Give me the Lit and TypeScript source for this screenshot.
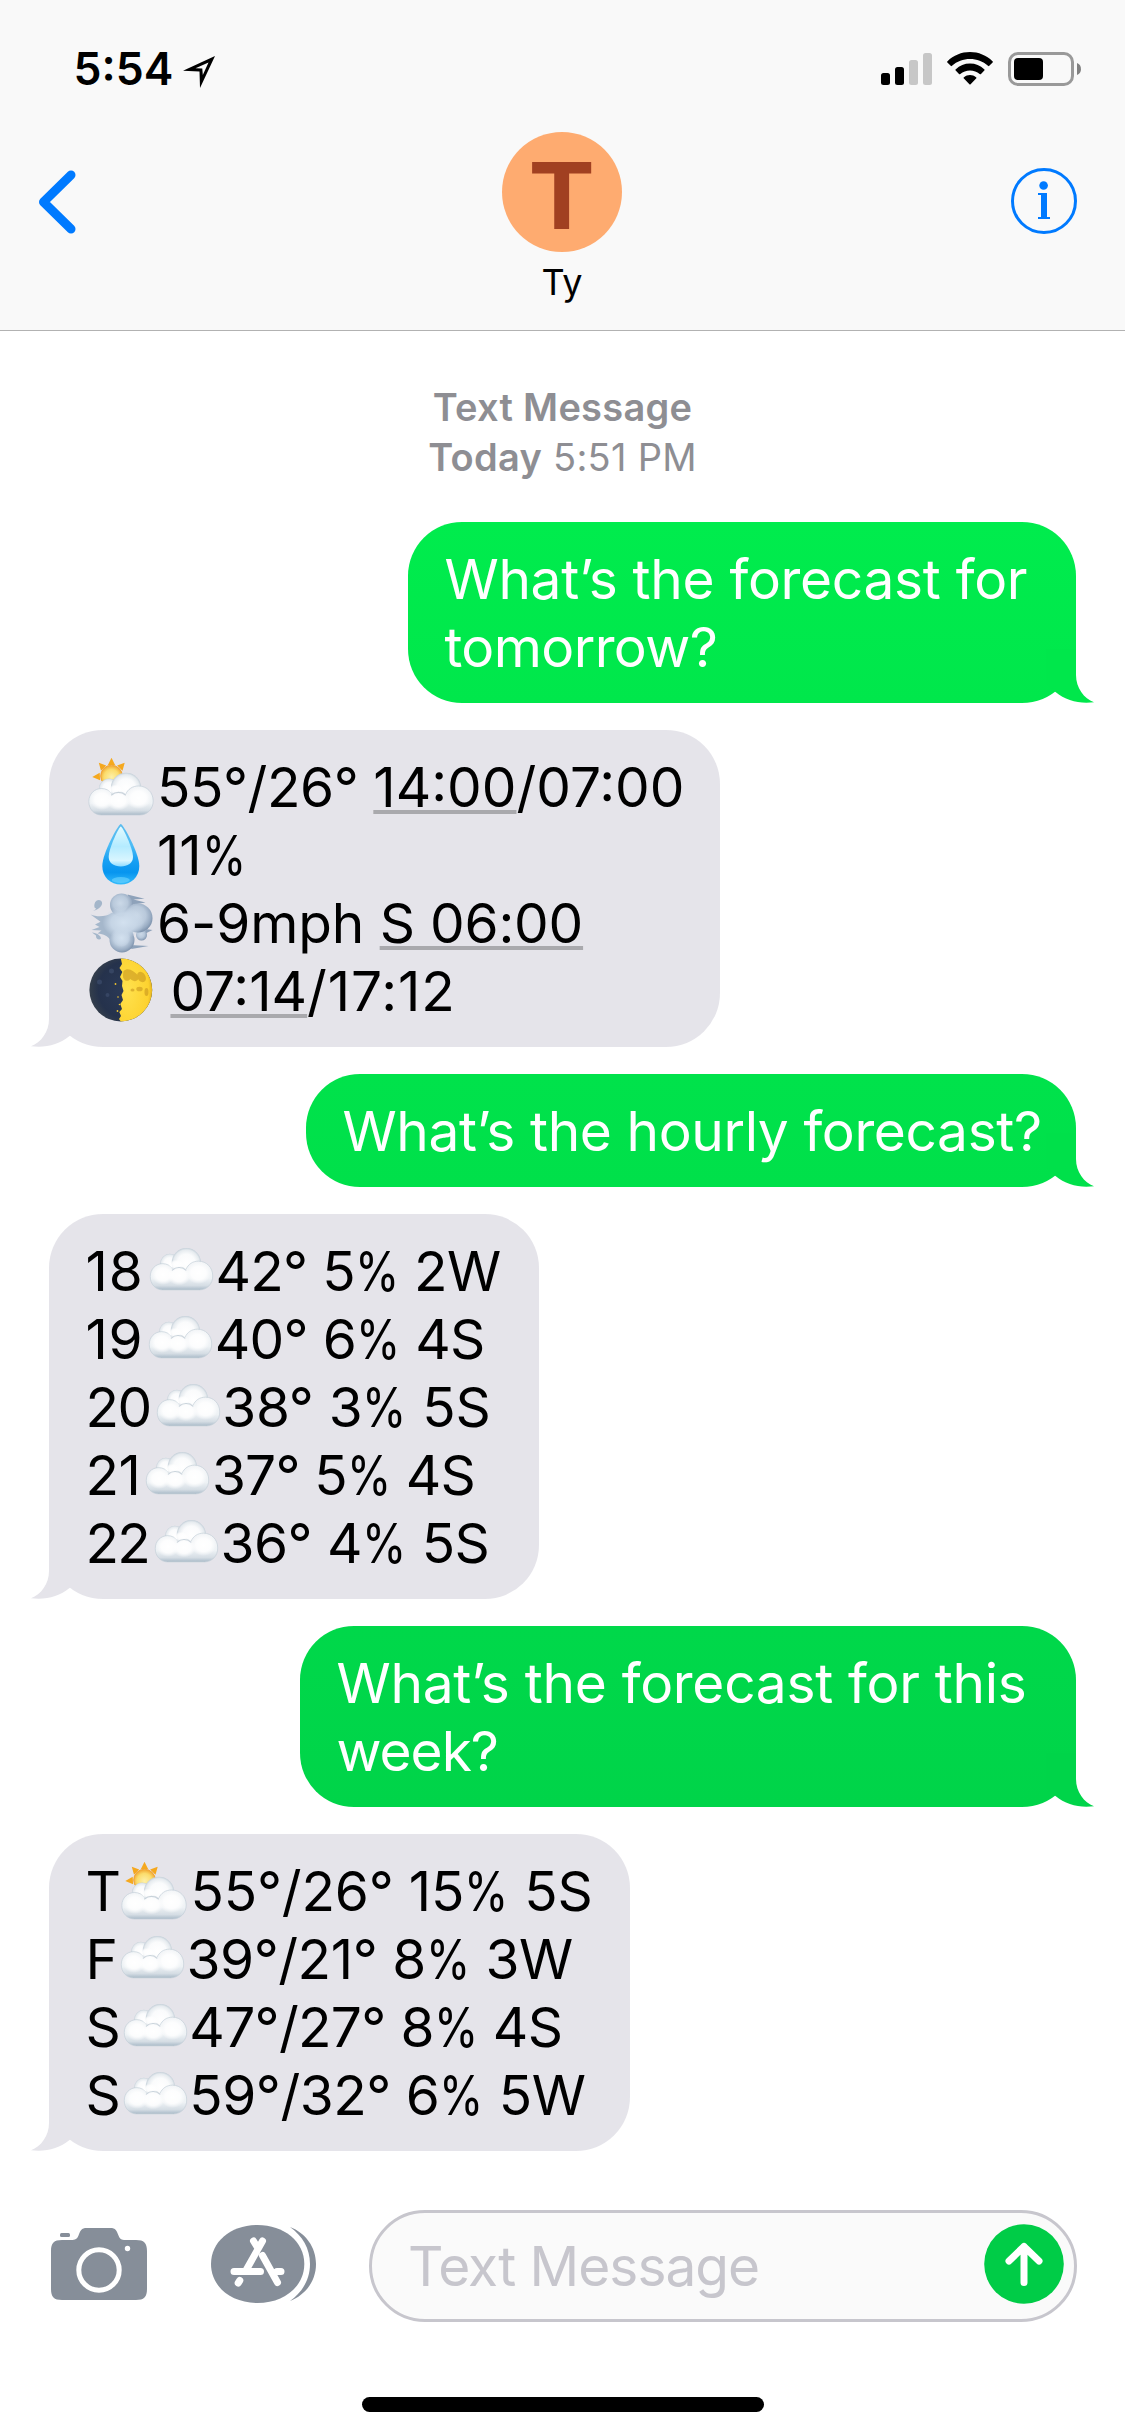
import { css, html, LitElement, svg } from "lit";
import { customElement, property } from "lit/decorators.js";
import { classMap } from "lit/directives/class-map.js";
import { styleMap } from "lit/directives/style-map.js";

type Glyph = "partly" | "cloud" | "drop" | "wind" | "moon";

interface Part {
  text?: string;
  link?: boolean;
  glyph?: Glyph;
  // letter spacing in px
  track?: number;
}

interface Message {
  sent: boolean;
  width: number;
  fill: [string, string];
  lines: Part[][];
}

const t = (text: string, track = 0): Part => ({ text, track });
const link = (text: string, track = 0): Part => ({ text, track, link: true });
const g = (glyph: Glyph): Part => ({ glyph });

const GRAY: [string, string] = ["#e5e4ea", "#e5e4ea"];

const MESSAGES: Message[] = [
  {
    sent: true,
    width: 668,
    fill: ["#00ec4d", "#00e74b"],
    lines: [[t("What’s the forecast for", -0.3)], [t("tomorrow?", -0.6)]],
  },
  {
    sent: false,
    width: 671,
    fill: GRAY,
    lines: [
      [g("partly"), t("55°/26° ", -0.45), link("14:00"), t("/07:00")],
      [g("drop"), t("11%")],
      [g("wind"), t("6-9mph ", -0.1), link("S 06:00", -0.2)],
      [g("moon"), t(" ", -2), link("07:14"), t("/17:12", 0.9)],
    ],
  },
  {
    sent: true,
    width: 770,
    fill: ["#00e24b", "#00e04a"],
    lines: [[t("What’s the hourly forecast?", -0.38)]],
  },
  {
    sent: false,
    width: 490,
    fill: GRAY,
    lines: [
      [t("18", 1), g("cloud"), t("42° 5% 2W", -0.7)],
      [t("19", 0.6), g("cloud"), t("40° 6% 4S", -0.7)],
      [t("20", -1.5), g("cloud"), t("38° 3% 5S", -0.3)],
      [t("21", -0.5), g("cloud"), t("37° 5% 4S", -0.8)],
      [t("22", -1.8), g("cloud"), t("36° 4% 5S", -0.5)],
    ],
  },
  {
    sent: true,
    width: 776,
    fill: ["#00d84a", "#00d449"],
    lines: [[t("What’s the forecast for this", -0.28)], [t("week?", -1)]],
  },
  {
    sent: false,
    width: 581,
    fill: GRAY,
    lines: [
      [t("T", -2), g("partly"), t("55°/26° 15% 5S", -0.2)],
      [t("F", -3), g("cloud"), t("39°/21° 8% 3W", -0.45)],
      [t("S", -3), g("cloud"), t("47°/27° 8% 4S", -0.7)],
      [t("S", -3), g("cloud"), t("59°/32° 6% 5W", -0.5)],
    ],
  },
];

@customElement("weather-glyph")
export class WeatherGlyph extends LitElement {
  @property({ type: String })
  kind: Glyph = "cloud";

  render() {
    return html`
      <svg class="glyph" viewBox="-1.5 0 71.5 68" aria-hidden="true">
        ${this._shape()}
      </svg>
    `;
  }

  private _shape() {
    switch (this.kind) {
      case "partly":
        return this._partly();
      case "drop":
        return this._drop();
      case "wind":
        return this._wind();
      case "moon":
        return this._moon();
      default:
        return svg`<g transform="translate(3.5 -8.5) scale(0.97 0.99)">${this._cloud()}</g>`;
    }
  }

  private _cloud() {
    return svg`
      <defs>
        <linearGradient id="body" x1="0" y1="0" x2="0" y2="1">
          <stop offset="0" stop-color="#f4f6f8" />
          <stop offset="0.6" stop-color="#eef2f5" />
          <stop offset="0.85" stop-color="#d5dde4" />
          <stop offset="1" stop-color="#a9bac8" />
        </linearGradient>
        <radialGradient id="puff" cx="0.5" cy="0.5" r="0.5">
          <stop offset="0" stop-color="#ffffff" />
          <stop offset="0.6" stop-color="#fafbfc" />
          <stop offset="0.88" stop-color="#e6ebef" />
          <stop offset="1" stop-color="#c6d1da" />
        </radialGradient>
        <radialGradient id="light" cx="0.5" cy="0.5" r="0.5">
          <stop offset="0" stop-color="#ffffff" />
          <stop offset="0.6" stop-color="#ffffff" stop-opacity="0.85" />
          <stop offset="1" stop-color="#ffffff" stop-opacity="0" />
        </radialGradient>
      </defs>
      <circle cx="21.5" cy="35.5" r="10" fill="url(#puff)" />
      <circle cx="38.5" cy="35" r="15.200" fill="url(#puff)" />
      <path
        d="M14 62 C6.500 62 1.300 56 1.300 48.500 C1.300 41 7 35.500 14 35.500 C18.500 35.500 22 37.500 24.500 41 C28 38 34.500 38 38 41.500 C40.500 36 45 33 51 33 C59.500 33 65.700 39.500 65.700 48 C65.700 56 60 62 52 62 Z"
        fill="url(#body)" stroke="#c3ced8" stroke-width="0.7" />
      <ellipse cx="14.500" cy="46.500" rx="12" ry="10.500" fill="url(#light)" />
      <ellipse cx="51" cy="45" rx="13" ry="11" fill="url(#light)" />
      <ellipse cx="31" cy="47.500" rx="12" ry="10" fill="url(#light)" />
      <ellipse cx="28" cy="36.500" rx="8" ry="5" fill="url(#light)" />
      <path d="M24 42 C28 38.500 34 38.500 38 42" fill="none" stroke="#c8d2da" stroke-width="1.100" stroke-linecap="round" />
    `;
  }

  private _partly() {
    return svg`
      <defs>
        <radialGradient id="sun" cx="0.5" cy="0.55" r="0.5">
          <stop offset="0" stop-color="#fdf0a8" />
          <stop offset="0.7" stop-color="#fbdc6c" />
          <stop offset="1" stop-color="#f3b13c" />
        </radialGradient>
      </defs>
      <path
        d="M24 4.800 L27.600 12 L20.400 12 Z M37.200 9.800 L35 17.800 L29.600 12.500 Z M11.300 9.800 L18.700 12.500 L13.500 17.800 Z M4.800 24 L12.200 19.800 L12.600 27.200 Z"
        fill="#f5a81e" />
      <circle cx="24" cy="23" r="10.800" fill="url(#sun)" stroke="#f0a030" stroke-width="0.9" />
      ${this._cloud()}
    `;
  }

  private _drop() {
    return svg`
      <defs>
        <linearGradient id="water" x1="0" y1="0" x2="0" y2="1">
          <stop offset="0" stop-color="#5dbcee" />
          <stop offset="0.35" stop-color="#4dbcf5" />
          <stop offset="0.6" stop-color="#18a0f3" />
          <stop offset="0.8" stop-color="#0795ef" />
          <stop offset="1" stop-color="#35bcfc" />
        </linearGradient>
        <linearGradient id="shine" x1="0" y1="0" x2="0" y2="1">
          <stop offset="0" stop-color="#e4fbff" />
          <stop offset="0.5" stop-color="#b4ebff" />
          <stop offset="0.85" stop-color="#d9f6ff" />
          <stop offset="1" stop-color="#8fdcff" />
        </linearGradient>
      </defs>
      <path d="M33.300 3 C35.500 3 51.800 32 51.800 45 C51.800 56 43.500 63.500 33.300 63.500 C23 63.500 14.800 56 14.800 45 C14.800 32 31 3 33.300 3 Z" fill="url(#water)" />
      <path d="M33.300 5.500 C35 5.500 45.500 27 45.500 36 C45.500 42 40 45.500 33.300 45.500 C26.500 45.500 21.200 42 21.200 36 C21.200 27 31.700 5.500 33.300 5.500 Z" fill="url(#shine)" />
      <ellipse cx="33.300" cy="59" rx="9" ry="3" fill="#6fd6ff" opacity="0.6" />
    `;
  }

  private _wind() {
    return svg`
      <defs>
        <radialGradient id="lobe" cx="0.45" cy="0.42" r="0.58">
          <stop offset="0" stop-color="#cbd9e8" />
          <stop offset="0.55" stop-color="#b9c9db" />
          <stop offset="0.85" stop-color="#98abc2" />
          <stop offset="1" stop-color="#7e93ad" />
        </radialGradient>
        <radialGradient id="core" cx="0.5" cy="0.5" r="0.5">
          <stop offset="0" stop-color="#d3e1ef" />
          <stop offset="0.6" stop-color="#c9d8e8" stop-opacity="0.9" />
          <stop offset="1" stop-color="#c9d8e8" stop-opacity="0" />
        </radialGradient>
      </defs>
      <path
        d="M24 24 C19 27.500 10 28.500 3 25.500 L13 32.800 L7.500 35.500 L12 38 L4 41 L14 41.500 L10 44.500 C17 45 19.500 47 23 51 L46 46 L40 18 Z"
        fill="#a5b7cb" />
      <path d="M40 5.500 L57 9.800 L46 10.500 L58 13.500 L44 16 Z M58 40 L65 41 L57 45 Z M42 56 L61 57 L44 60 Z" fill="#8ea2ba" />
      <circle cx="54" cy="46" r="5.500" fill="url(#lobe)" />
      <circle cx="34" cy="16" r="11.500" fill="url(#lobe)" />
      <circle cx="34.500" cy="51" r="12.500" fill="url(#lobe)" />
      <circle cx="50.500" cy="29" r="14.500" fill="url(#lobe)" />
      <ellipse cx="36" cy="33.500" rx="21" ry="16" fill="url(#core)" />
      <ellipse cx="34" cy="49" rx="9" ry="9" fill="url(#core)" />
      <path d="M7 18.500 C6 13 10 9.500 13.500 11.800 C17 15 12 20.500 5.500 22 C8.500 20.500 9.500 19.500 7 18.500 Z" fill="#a4b6ca" />
      <path d="M4.500 43.500 C9 44 13.500 46.500 13.500 49.500 C12 52 8 50 8.500 46.500 Z" fill="#a4b6ca" />
    `;
  }

  private _moon() {
    return svg`
      <defs>
        <radialGradient id="dark" cx="0.6" cy="0.5" r="0.65">
          <stop offset="0" stop-color="#2b3a58" />
          <stop offset="0.7" stop-color="#25324c" />
          <stop offset="1" stop-color="#3a434b" />
        </radialGradient>
        <radialGradient id="lit" cx="0.25" cy="0.5" r="0.85">
          <stop offset="0" stop-color="#ffe14d" />
          <stop offset="0.75" stop-color="#fdd22f" />
          <stop offset="1" stop-color="#d09a16" />
        </radialGradient>
      </defs>
      <circle cx="33.300" cy="33" r="31.400" fill="url(#dark)" />
      <path
        d="M33.300 1.600 A31.400 31.400 0 0 1 33.300 64.400 L31.500 62 L33.500 59 L31.800 55 L34.500 52 L32.800 47 L35.500 43 L34 38 L36 34 L34.500 29 L35 24 L32.500 20 L34.800 15 L32 11 L34.500 7 Z"
        fill="url(#lit)" />
      <g fill="#c9971f" opacity="0.6">
        <path d="M36 14 C41 10 46 14 51 19 C52 24 47 26 43 22 C39 26 35 23 35.500 18 Z" />
        <ellipse cx="54" cy="20" rx="4" ry="5.500" transform="rotate(-30 54 20)" />
        <ellipse cx="52" cy="32" rx="3.200" ry="2.300" />
        <ellipse cx="59" cy="35" rx="2" ry="4" />
        <ellipse cx="45" cy="33" rx="2" ry="1.500" />
      </g>
      <g fill="#f2c52e">
        <circle cx="28" cy="27" r="0.900" />
        <circle cx="30.500" cy="40" r="0.800" />
        <circle cx="30" cy="54" r="0.900" />
        <circle cx="32" cy="47.500" r="0.800" />
      </g>
      <g fill="#3d4d6c" opacity="0.7">
        <circle cx="12" cy="25" r="2.500" />
        <circle cx="20" cy="38" r="2" />
        <circle cx="24" cy="14" r="2.500" />
      </g>
    `;
  }

  static styles = css`
    :host {
      display: block;
      flex: none;
    }

    .glyph {
      display: block;
      width: 71.5px;
      height: 68px;
    }
  `;
}

@customElement("message-bubble")
export class MessageBubble extends LitElement {
  @property({ attribute: false })
  message!: Message;

  render() {
    const { sent, width, fill, lines } = this.message;
    return html`
      <div
        class=${classMap({ bubble: true, sent })}
        style=${styleMap({
          width: `${width}px`,
          "--top": fill[0],
          "--bottom": fill[1],
        })}
      >
        ${lines.map(
          (parts) => html`<div class="line">${parts.map((p) => this._part(p))}</div>`
        )}
        <svg class="tail" viewBox="-30 -54 48 54" aria-hidden="true">
          <path
            d="M-30 -54 L0 -54 L0 -28 C0 -15 8 -4.500 18 -0.800 C4 1 -10 -2 -20.500 -11 L-30 -20 Z"
          />
        </svg>
      </div>
    `;
  }

  private _part(part: Part) {
    if (part.glyph) {
      return html`<weather-glyph kind=${part.glyph}></weather-glyph>`;
    }
    // the percent sign is set narrower than the font draws it
    const [before, after] = (part.text ?? "").split("%");
    return html`<span
      class=${classMap({ text: true, link: !!part.link })}
      style=${styleMap({ letterSpacing: `${part.track ?? 0}px` })}
      >${before}${after === undefined
        ? ""
        : html`<span class="percent">%</span>${after}`}</span
    >`;
  }

  static styles = css`
    :host {
      display: flex;
    }

    .bubble {
      position: relative;
      box-sizing: border-box;
      padding: 23px 0 21.8px 36.5px;
      border-radius: 54px;
      background: linear-gradient(var(--top), var(--bottom));
      color: #000;
      font-size: 55px;
      line-height: 68px;
    }

    .sent {
      margin-left: auto;
      color: #fff;
    }

    .line {
      display: flex;
      height: 68px;
    }

    .text {
      white-space: pre;
    }

    .percent {
      display: inline-block;
      margin-right: -9px;
      transform: scaleX(0.82);
      transform-origin: left;
    }

    .link {
      text-decoration: underline;
      text-decoration-color: #a9a9ad;
      text-decoration-thickness: 4px;
      text-decoration-skip-ink: none;
      text-underline-offset: 3px;
    }

    .tail {
      position: absolute;
      bottom: 0;
      left: -18px;
      width: 48px;
      height: 54px;
      overflow: visible;
      fill: var(--bottom);
      transform: scaleX(-1);
    }

    .sent .tail {
      left: auto;
      right: -18px;
      transform: none;
    }
  `;
}

@customElement("app-root")
export class AppRoot extends LitElement {
  render() {
    return html`
      <header class="header">
        ${this._statusBar()}
        <div class="nav">
          <svg class="back" viewBox="0 0 38 64">
            <path d="M33 5 L5.500 32 L33 59" />
          </svg>
          <div class="contact">
            <div class="avatar"><span class="initial">T</span></div>
            <div class="name">Ty</div>
          </div>
          <svg class="info" viewBox="0 0 66 66">
            <circle class="ring" cx="33" cy="33" r="31.500" />
            <circle cx="32.600" cy="17.500" r="4.300" />
            <path d="M27 25 H36 V49 H39 V51 H27 V49 H30 V27 H27 Z" />
          </svg>
        </div>
      </header>
      <main class="thread">
        <div class="stamp">
          <div><b>Text Message</b></div>
          <div><b>Today</b> 5:51 PM</div>
        </div>
        ${MESSAGES.map(
          (m) => html`<message-bubble .message=${m}></message-bubble>`
        )}
      </main>
      ${this._composer()}
      <div class="home"></div>
    `;
  }

  private _statusBar() {
    return html`
      <div class="status">
        <span class="time">5:54</span>
        <svg class="location" viewBox="0 0 32 32">
          <path
            fill-rule="evenodd"
            d="M32 0 L17 32 L16.500 15.500 L0 14.800 Z M25.500 6.500 L12.500 12.300 L19.300 12.500 L19.800 19 Z"
          />
        </svg>
        <svg class="signal" viewBox="0 0 51 34">
          <rect x="0" y="21" width="9" height="12" rx="2.500" />
          <rect x="14" y="15" width="9" height="18" rx="2.500" />
          <rect class="off" x="28" y="8" width="9" height="25" rx="2.500" />
          <rect class="off" x="42" y="1" width="9" height="32" rx="2.500" />
        </svg>
        <svg class="wifi" viewBox="0 0 46 34">
          <path
            d="M23 0 C31.500 0 39.500 3.300 45.500 9.200 C46 9.700 46 10 45.600 10.400 L42.300 13.800 C41.800 14.300 41.500 14.300 41 13.800 C36 9.300 29.800 7 23 7 C16.200 7 10 9.300 5 13.800 C4.500 14.300 4.200 14.300 3.700 13.800 L0.400 10.400 C0 10 0 9.700 0.500 9.200 C6.500 3.300 14.500 0 23 0 Z"
          />
          <path
            d="M23 11.500 C28.500 11.500 33.300 13.500 37.200 17.300 C37.700 17.800 37.700 18.100 37.300 18.500 L34 21.900 C33.500 22.400 33.200 22.400 32.700 21.900 C30 19.600 26.700 18.400 23 18.400 C19.300 18.400 16 19.600 13.300 21.900 C12.800 22.400 12.500 22.400 12 21.900 L8.700 18.500 C8.300 18.100 8.300 17.800 8.800 17.300 C12.700 13.500 17.500 11.500 23 11.500 Z"
          />
          <path
            d="M23 23 C25.200 23 27.300 23.800 29 25.200 C29.600 25.700 29.600 26.100 29.100 26.600 L23.600 32.300 C23.200 32.700 22.800 32.700 22.400 32.300 L16.900 26.600 C16.400 26.100 16.400 25.700 17 25.200 C18.700 23.800 20.800 23 23 23 Z"
          />
        </svg>
        <svg class="battery" viewBox="0 0 74 34">
          <rect class="shell" x="1.500" y="1.500" width="63" height="31" rx="8.500" />
          <rect x="6" y="6" width="29" height="22" rx="4" />
          <path class="nub" d="M69 11 C74.300 12.500 74.300 21.500 69 23 Z" />
        </svg>
      </div>
    `;
  }

  private _composer() {
    return html`
      <div class="composer">
        <svg class="camera" viewBox="0 0 96 72">
          <rect x="9" y="5" width="10" height="4" rx="1.500" />
          <path
            d="M11 12 H20 C24.500 12 26 11 27.500 7.500 C29.500 2.500 30 0 36 0 H59 C65 0 65.500 2.500 67.500 7.500 C69 11 70 12 74.500 12 H85 C93 12 96 15 96 23 V61 C96 69 93 72 85 72 H11 C3 72 0 69 0 61 V23 C0 15 3 12 11 12 Z"
          />
          <circle class="lens" cx="48" cy="42" r="20.200" />
          <circle class="flash" cx="76.500" cy="20.500" r="2.700" />
        </svg>
        <svg class="apps" viewBox="0 0 105 78">
          <path
            d="M46.500 0 C73 0 93.300 16.500 93.300 39 C93.300 61.500 73 78 46.500 78 C20 78 0 61.500 0 39 C0 16.500 20 0 46.500 0 Z"
          />
          <path
            d="M79 2 C94.500 8 105 22 105 39 C105 56 94.500 70 79 76 C91.500 67 99 54.500 99 39 C99 23.500 91.500 11 79 2 Z"
          />
          <path
            class="stroke"
            d="M42.500 16 L46.500 22.500 M51.500 16 L35.500 44.500 M23 46.500 H49.500 M66 46.500 H70 M51.500 30.500 L66.500 57.500 M28.800 55.500 L27.200 58"
          />
        </svg>
        <div class="field">
          <span class="placeholder">Text Message</span>
          <svg class="send" viewBox="0 0 80 80">
            <circle cx="40" cy="40" r="39.800" />
            <path d="M40 22.500 V58.500 M25 37 L40 22.500 L55 37" />
          </svg>
        </div>
      </div>
    `;
  }

  static styles = css`
    :host {
      display: flex;
      flex-direction: column;
      box-sizing: border-box;
      width: 1125px;
      height: 2436px;
      overflow: hidden;
      background: #fff;
      font-family: Inter, "Liberation Sans", sans-serif;
      color: #000;
    }

    svg {
      display: block;
      flex: none;
    }

    .header {
      box-sizing: border-box;
      height: 331px;
      background: #f9f9f9;
      border-bottom: 1px solid #b2b2b2;
    }

    .status {
      display: flex;
      align-items: center;
      box-sizing: border-box;
      height: 132px;
      padding: 6px 43px 0 73.5px;
    }

    .time {
      width: 109.5px;
      font-size: 44.5px;
      font-weight: 600;
      line-height: 54px;
    }

    .location {
      width: 32px;
      height: 32px;
      margin-top: 5px;
    }

    .signal {
      width: 51px;
      height: 34px;
      margin-left: auto;
    }

    .signal .off {
      fill: #c7c7c7;
    }

    .wifi {
      width: 46px;
      height: 34px;
      margin-left: 15px;
    }

    .battery {
      width: 74px;
      height: 34px;
      margin-left: 15px;
    }

    .battery .shell {
      fill: none;
      stroke: #999;
      stroke-width: 3;
    }

    .battery .nub {
      fill: #808080;
    }

    .nav {
      display: grid;
      grid-template-columns: 1fr auto 1fr;
      align-items: start;
      padding: 0 48px 0 38px;
    }

    .back {
      width: 38px;
      height: 64px;
      margin-top: 37.5px;
      fill: none;
      stroke: #007aff;
      stroke-width: 9;
      stroke-linecap: round;
      stroke-linejoin: round;
    }

    .contact {
      display: flex;
      flex-direction: column;
      align-items: center;
      margin-left: 9px;
    }

    .avatar {
      width: 120px;
      height: 120px;
      border-radius: 50%;
      background: #feab70;
      color: #a14021;
      font-size: 92px;
      font-weight: 700;
      line-height: 127px;
      text-align: center;
    }

    .initial {
      display: inline-block;
      transform: scaleX(1.08);
    }

    .name {
      margin-top: 8px;
      font-size: 36px;
      line-height: 44px;
    }

    .info {
      width: 66px;
      height: 66px;
      margin-top: 36px;
      justify-self: end;
      fill: #007aff;
    }

    .info .ring {
      fill: none;
      stroke: #007aff;
      stroke-width: 3;
    }

    .thread {
      display: flex;
      flex-direction: column;
      gap: 27.2px;
      padding: 52px 49px 0;
    }

    .stamp {
      margin-bottom: 12px;
      color: #8e8e93;
      font-size: 38px;
      line-height: 49.9px;
      letter-spacing: 0.27px;
      text-align: center;
    }

    .stamp b {
      font-weight: 600;
    }

    .composer {
      display: flex;
      align-items: center;
      margin-top: auto;
      padding: 0 48px 0 51px;
    }

    .camera {
      width: 96px;
      height: 72px;
      margin-bottom: 4px;
      fill: #868e99;
    }

    .camera .lens {
      fill: none;
      stroke: #fff;
      stroke-width: 5;
    }

    .camera .flash {
      fill: #fff;
    }

    .apps {
      width: 105px;
      height: 78px;
      margin: 0 53px 4px 64px;
      fill: #868e99;
    }

    .apps .stroke {
      fill: none;
      stroke: #fff;
      stroke-width: 7;
      stroke-linecap: round;
      stroke-linejoin: round;
    }

    .field {
      display: flex;
      flex: 1;
      align-items: center;
      justify-content: space-between;
      box-sizing: border-box;
      height: 112px;
      padding: 0 10px 0 36px;
      border: 3px solid #c7c6cd;
      border-radius: 56px;
      background: #fafafa;
    }

    .placeholder {
      color: #c7c6cd;
      font-size: 55px;
      line-height: 68px;
      letter-spacing: -1px;
    }

    .send {
      width: 80px;
      height: 80px;
      margin-bottom: 4px;
      fill: #00cc47;
    }

    .send path {
      fill: none;
      stroke: #fff;
      stroke-width: 7;
      stroke-linecap: round;
      stroke-linejoin: round;
    }

    .home {
      flex: none;
      align-self: center;
      width: 402px;
      height: 15px;
      margin: 75px 0 24px;
      border-radius: 7.5px;
      background: #000;
    }
  `;
}

declare global {
  interface HTMLElementTagNameMap {
    "weather-glyph": WeatherGlyph;
    "message-bubble": MessageBubble;
    "app-root": AppRoot;
  }
}
